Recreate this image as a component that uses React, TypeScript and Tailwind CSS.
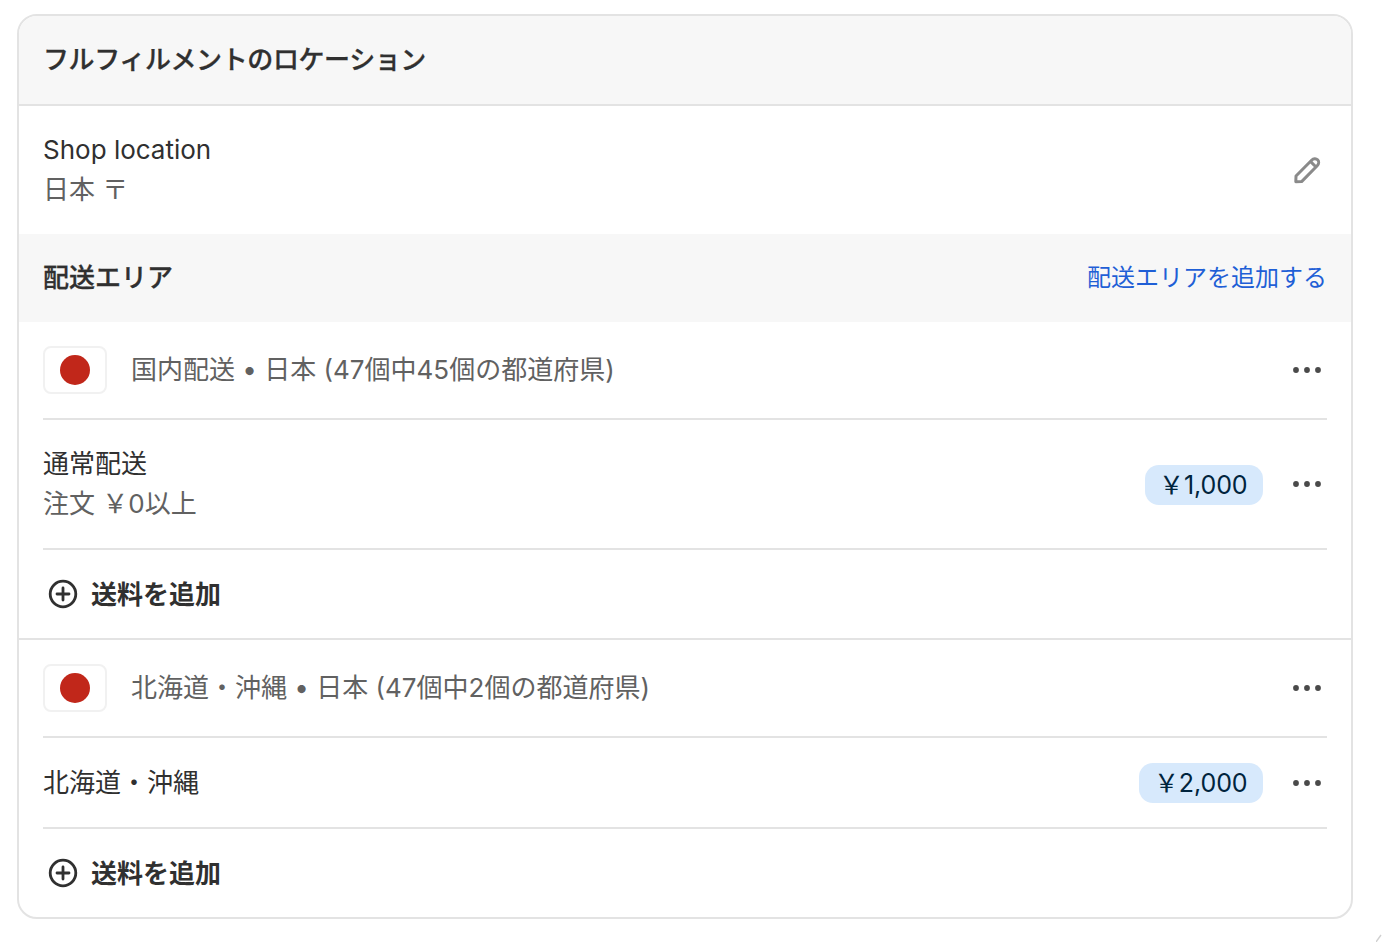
import React from "react";

const Dots = () => (
  <svg width="30" height="8" viewBox="0 0 30 8" className="block shrink-0">
    <circle cx="4" cy="4" r="2.9" fill="#4a4a4a" />
    <circle cx="15" cy="4" r="2.9" fill="#4a4a4a" />
    <circle cx="26" cy="4" r="2.9" fill="#4a4a4a" />
  </svg>
);

const Flag = () => (
  <div className="w-[64px] h-[48px] shrink-0 rounded-[8px] border-2 border-[#f1f1f1] bg-white flex items-center justify-center">
    <div className="w-[30px] h-[30px] rounded-full bg-[#c1271a]" />
  </div>
);

const Pencil = () => (
  <svg width="30" height="30" viewBox="0 0 30 30" fill="none" stroke="#8a8a8a" strokeWidth="3" strokeLinejoin="round" className="block">
    <path d="M3.8 26.8 L4 21 L19.6 5.2 C21.4 3.4 24 3.2 25.6 4.8 C27.2 6.4 27 9 25.2 10.8 L9.6 26.6 Z" />
    <path d="M18.4 6.4 L24 12" />
  </svg>
);

const PlusCircle = () => (
  <svg width="30" height="30" viewBox="0 0 30 30" fill="none" stroke="#303030" strokeWidth="2.8" strokeLinecap="round" className="block">
    <circle cx="15" cy="15" r="12.8" />
    <path d="M15 9 V21 M9 15 H21" />
  </svg>
);

const Price = ({ children }: { children: React.ReactNode }) => (
  <div className="h-[40px] pl-[14.5px] pr-[15.5px] rounded-[14px] bg-[#d7e9fc] text-[#00243d] text-[25px] leading-[40px] tracking-[-0.1px]">{children}</div>
);

const AddRate = () => (
  <div className="h-[88px] flex items-center gap-[13px] pl-[29px]">
    <PlusCircle />
    <span className="text-[26px] font-semibold text-[#303030]">送料を追加</span>
  </div>
);

const ZoneHead = ({ label }: { label: string }) => (
  <div className="h-[98px] mx-[24px] border-b-2 border-[#e3e3e3] flex items-center justify-between pr-[5px]">
    <div className="flex items-center gap-[24px]">
      <Flag />
      <span className="text-[26px] pb-[2px] text-[#616161]">{label}</span>
    </div>
    <Dots />
  </div>
);

export default function App() {
  return (
    <div
      className="relative w-[1382px] h-[942px] overflow-hidden bg-white pt-[14px] pl-[17px]"
      style={{ fontFamily: 'Inter, "Noto Sans CJK JP", sans-serif' }}
    >
      <div className="w-[1336px] h-[905px] border-2 border-[#e3e3e3] rounded-[20px] overflow-hidden">
        <div className="h-[90px] bg-[#f7f7f7] border-b-2 border-[#e3e3e3] flex items-center px-[24px]">
          <h2 className="text-[26px] pb-[2px] tracking-[-0.4px] font-medium [-webkit-text-stroke:0.3px_#303030] text-[#303030]">フルフィルメントのロケーション</h2>
        </div>

        <div className="h-[128px] flex items-center justify-between pl-[24px] pr-[29px]">
          <div>
            <div className="text-[26px] leading-[40px] text-[#303030]">Shop location</div>
            <div className="text-[26px] leading-[40px] text-[#616161]">日本 〒</div>
          </div>
          <Pencil />
        </div>

        <div className="h-[88px] bg-[#f7f7f7] flex items-center justify-between px-[24px]">
          <span className="text-[26px] pb-[2px] font-medium [-webkit-text-stroke:0.3px_#303030] text-[#303030]">配送エリア</span>
          <span className="text-[24px] text-[#1f5fd6]">配送エリアを追加する</span>
        </div>

        <ZoneHead label="国内配送 • 日本 (47個中45個の都道府県)" />

        <div className="h-[130px] mx-[24px] border-b-2 border-[#e3e3e3] flex items-center justify-between pr-[5px]">
          <div>
            <div className="text-[26px] leading-[40px] text-[#303030]">通常配送</div>
            <div className="text-[26px] leading-[40px] text-[#616161]">注文 ￥0以上</div>
          </div>
          <div className="flex items-center gap-[29px]">
            <div className="mt-[2px]">
              <Price>￥1,000</Price>
            </div>
            <Dots />
          </div>
        </div>

        <AddRate />
        <div className="border-b-2 border-[#e3e3e3]" />

        <ZoneHead label="北海道・沖縄 • 日本 (47個中2個の都道府県)" />

        <div className="h-[91px] mx-[24px] border-b-2 border-[#e3e3e3] flex items-center justify-between pr-[5px]">
          <span className="text-[26px] text-[#303030]">北海道・沖縄</span>
          <div className="flex items-center gap-[29px]">
            <Price>￥2,000</Price>
            <Dots />
          </div>
        </div>

        <AddRate />
      </div>

      <svg width="6" height="8" viewBox="0 0 6 8" className="absolute right-0 bottom-0">
        <path d="M0 8 L5 1" stroke="#d0d0d0" strokeWidth="1.4" />
      </svg>
    </div>
  );
}
